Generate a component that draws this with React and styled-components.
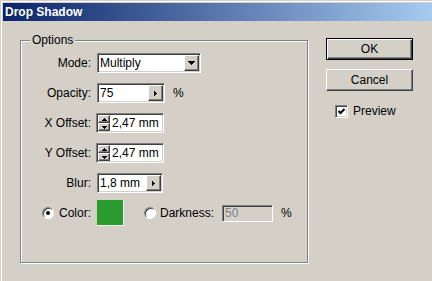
import React from "react";
import styled, { createGlobalStyle } from "styled-components";

const GlobalStyle = createGlobalStyle`
  html, body {
    margin: 0;
    padding: 0;
    background: #d4d0c8;
  }
  body {
    font-family: "Liberation Sans", Arial, sans-serif;
    font-size: 12px;
    color: #000;
  }
`;

const Window = styled.div`
  height: 281px;
  box-sizing: border-box;
  border-top: 1px solid #d4d0c8;
  border-left: 1px solid #d4d0c8;
  box-shadow: inset 1px 1px 0 #fff;
  padding: 2px 0 0 2px;
  background: #d4d0c8;
  overflow: hidden;
`;

const TitleBar = styled.div`
  height: 18px;
  display: flex;
  align-items: center;
  padding-left: 2px;
  background: linear-gradient(to right, #0a246a, #a6caf0);
  color: #fff;
  font-weight: bold;
  font-size: 12px;
`;

const Body = styled.div`
  display: flex;
  align-items: flex-start;
  gap: 18px;
  padding: 17px 0 0 17px;
`;

const GroupBox = styled.div`
  position: relative;
  margin-top: 2px;
  width: 288px;
  height: 223px;
  box-sizing: border-box;
  border: 1px solid #808080;
  box-shadow: inset 1px 1px 0 #fff, 1px 1px 0 #fff;
  padding-top: 7px;
`;

const Legend = styled.span`
  position: absolute;
  top: -8px;
  left: 9px;
  padding: 0 2px;
  line-height: 14px;
  background: #d4d0c8;
`;

const Row = styled.div`
  display: flex;
  align-items: center;
  height: 30px;
`;

const Label = styled.div`
  flex: none;
  width: 70px;
  margin-right: 6px;
  display: flex;
  justify-content: flex-end;
  align-items: center;
  gap: 5px;
`;

const Field = styled.div`
  flex: none;
  display: flex;
  width: ${(p) => p.$w}px;
  height: ${(p) => p.$h || 20}px;
  margin-left: ${(p) => p.$ml || 0}px;
  box-sizing: border-box;
  border: 1px solid;
  border-color: #808080 #fff #fff #808080;
  box-shadow: inset 1px 1px 0 #404040, inset -1px -1px 0 #d4d0c8;
  padding: 1px;
  background: ${(p) => (p.$disabled ? "#d4d0c8" : "#fff")};
`;

const FieldText = styled.div`
  flex: 1;
  padding-left: 1px;
  line-height: ${(p) => p.$lh || 16}px;
  color: ${(p) => (p.$disabled ? "#808080" : "#000")};
  white-space: nowrap;
`;

const Raised = styled.div`
  flex: none;
  width: ${(p) => p.$w}px;
  box-sizing: border-box;
  display: flex;
  align-items: center;
  justify-content: center;
  background: #d4d0c8;
  border: 1px solid;
  border-color: #fff #404040 #404040 #fff;
  box-shadow: inset -1px -1px 0 #808080;
`;

const Spinner = styled.div`
  flex: none;
  width: 12px;
  display: flex;
  flex-direction: column;
  margin-right: 1px;
`;

const SpinHalf = styled(Raised)`
  flex: 1;
  width: 12px;
`;

const Unit = styled.span`
  margin-left: ${(p) => p.$ml || 8}px;
`;

const Swatch = styled.div`
  flex: none;
  width: 27px;
  height: 26px;
  box-sizing: border-box;
  background: #2a9b2c;
  border-right: 1px solid #f4f4f0;
  border-bottom: 1px solid #f4f4f0;
`;

const RadioGroup = styled.div`
  display: flex;
  align-items: center;
  gap: 4px;
  margin-left: ${(p) => p.$ml || 0}px;
  margin-right: ${(p) => p.$mr || 0}px;
`;

const Radio = styled.div`
  flex: none;
  width: 12px;
  height: 12px;
  box-sizing: border-box;
  border-radius: 50%;
  border: 1px solid;
  border-color: #808080 #fff #fff #808080;
  box-shadow: inset 1px 1px 0 #404040;
  background: #fff;
  display: flex;
  align-items: center;
  justify-content: center;
`;

const RadioDot = styled.div`
  width: 4px;
  height: 4px;
  border-radius: 50%;
  background: #000;
`;

const ButtonColumn = styled.div`
  display: flex;
  flex-direction: column;
  gap: 9px;
  width: 87px;
`;

const PushButton = styled.button`
  width: 87px;
  height: 22px;
  padding: 0;
  font-family: inherit;
  font-size: 12px;
  color: #000;
  background: #d4d0c8;
  border: 1px solid;
  border-color: ${(p) => (p.$default ? "#000" : "#fff #404040 #404040 #fff")};
  box-shadow: ${(p) =>
    p.$default
      ? "inset 1px 1px 0 #fff, inset -1px -1px 0 #404040, inset -2px -2px 0 #808080"
      : "inset -1px -1px 0 #808080"};
`;

const CheckRow = styled.div`
  display: flex;
  align-items: center;
  gap: 5px;
  margin-top: 4px;
  padding-left: 9px;
`;

const CheckBox = styled.div`
  flex: none;
  width: 13px;
  height: 13px;
  box-sizing: border-box;
  border: 1px solid;
  border-color: #808080 #fff #fff #808080;
  box-shadow: inset 1px 1px 0 #404040, inset -1px -1px 0 #d4d0c8;
  background: #fff;
  display: flex;
  align-items: center;
  justify-content: center;
`;

const Tri = ({ dir }) => {
  const shapes = {
    down: { w: 7, h: 4, pts: "0,0 7,0 3.5,4" },
    right: { w: 3, h: 5, pts: "0,0 3,2.5 0,5" },
    up: { w: 5, h: 3, pts: "2.5,0 5,3 0,3" },
    downSmall: { w: 5, h: 3, pts: "0,0 5,0 2.5,3" },
  };
  const s = shapes[dir];
  return (
    <svg width={s.w} height={s.h} viewBox={`0 0 ${s.w} ${s.h}`} shapeRendering="crispEdges">
      <polygon points={s.pts} fill="#000" />
    </svg>
  );
};

const SpinField = ({ value }) => (
  <Field $w={68} $ml={-1}>
    <Spinner>
      <SpinHalf>
        <Tri dir="up" />
      </SpinHalf>
      <SpinHalf>
        <Tri dir="downSmall" />
      </SpinHalf>
    </Spinner>
    <FieldText>{value}</FieldText>
  </Field>
);

const StepField = ({ value, w }) => (
  <Field $w={w}>
    <FieldText>{value}</FieldText>
    <Raised $w={15}>
      <Tri dir="right" />
    </Raised>
  </Field>
);

export default function App() {
  return (
    <>
      <GlobalStyle />
      <Window>
        <TitleBar>Drop Shadow</TitleBar>
        <Body>
          <GroupBox>
            <Legend>Options</Legend>
            <Row>
              <Label>Mode:</Label>
              <Field $w={104}>
                <FieldText>Multiply</FieldText>
                <Raised $w={15}>
                  <Tri dir="down" />
                </Raised>
              </Field>
            </Row>
            <Row>
              <Label>Opacity:</Label>
              <StepField value="75" w={68} />
              <Unit>%</Unit>
            </Row>
            <Row>
              <Label>X Offset:</Label>
              <SpinField value="2,47 mm" />
            </Row>
            <Row>
              <Label>Y Offset:</Label>
              <SpinField value="2,47 mm" />
            </Row>
            <Row>
              <Label>Blur:</Label>
              <StepField value="1,8 mm" w={66} />
            </Row>
            <Row>
              <Label>
                <Radio>
                  <RadioDot />
                </Radio>
                Color:
              </Label>
              <Swatch />
              <RadioGroup $ml={20} $mr={8}>
                <Radio />
                Darkness:
              </RadioGroup>
              <Field $w={51} $h={17} $disabled>
                <FieldText $lh={13} $disabled>
                  50
                </FieldText>
              </Field>
              <Unit>%</Unit>
            </Row>
          </GroupBox>
          <ButtonColumn>
            <PushButton $default>OK</PushButton>
            <PushButton>Cancel</PushButton>
            <CheckRow>
              <CheckBox>
                <svg width="7" height="7" viewBox="0 0 7 7">
                  <polyline points="0.5,3 2.5,5 6.5,1" fill="none" stroke="#000" strokeWidth="2" />
                </svg>
              </CheckBox>
              Preview
            </CheckRow>
          </ButtonColumn>
        </Body>
      </Window>
    </>
  );
}
